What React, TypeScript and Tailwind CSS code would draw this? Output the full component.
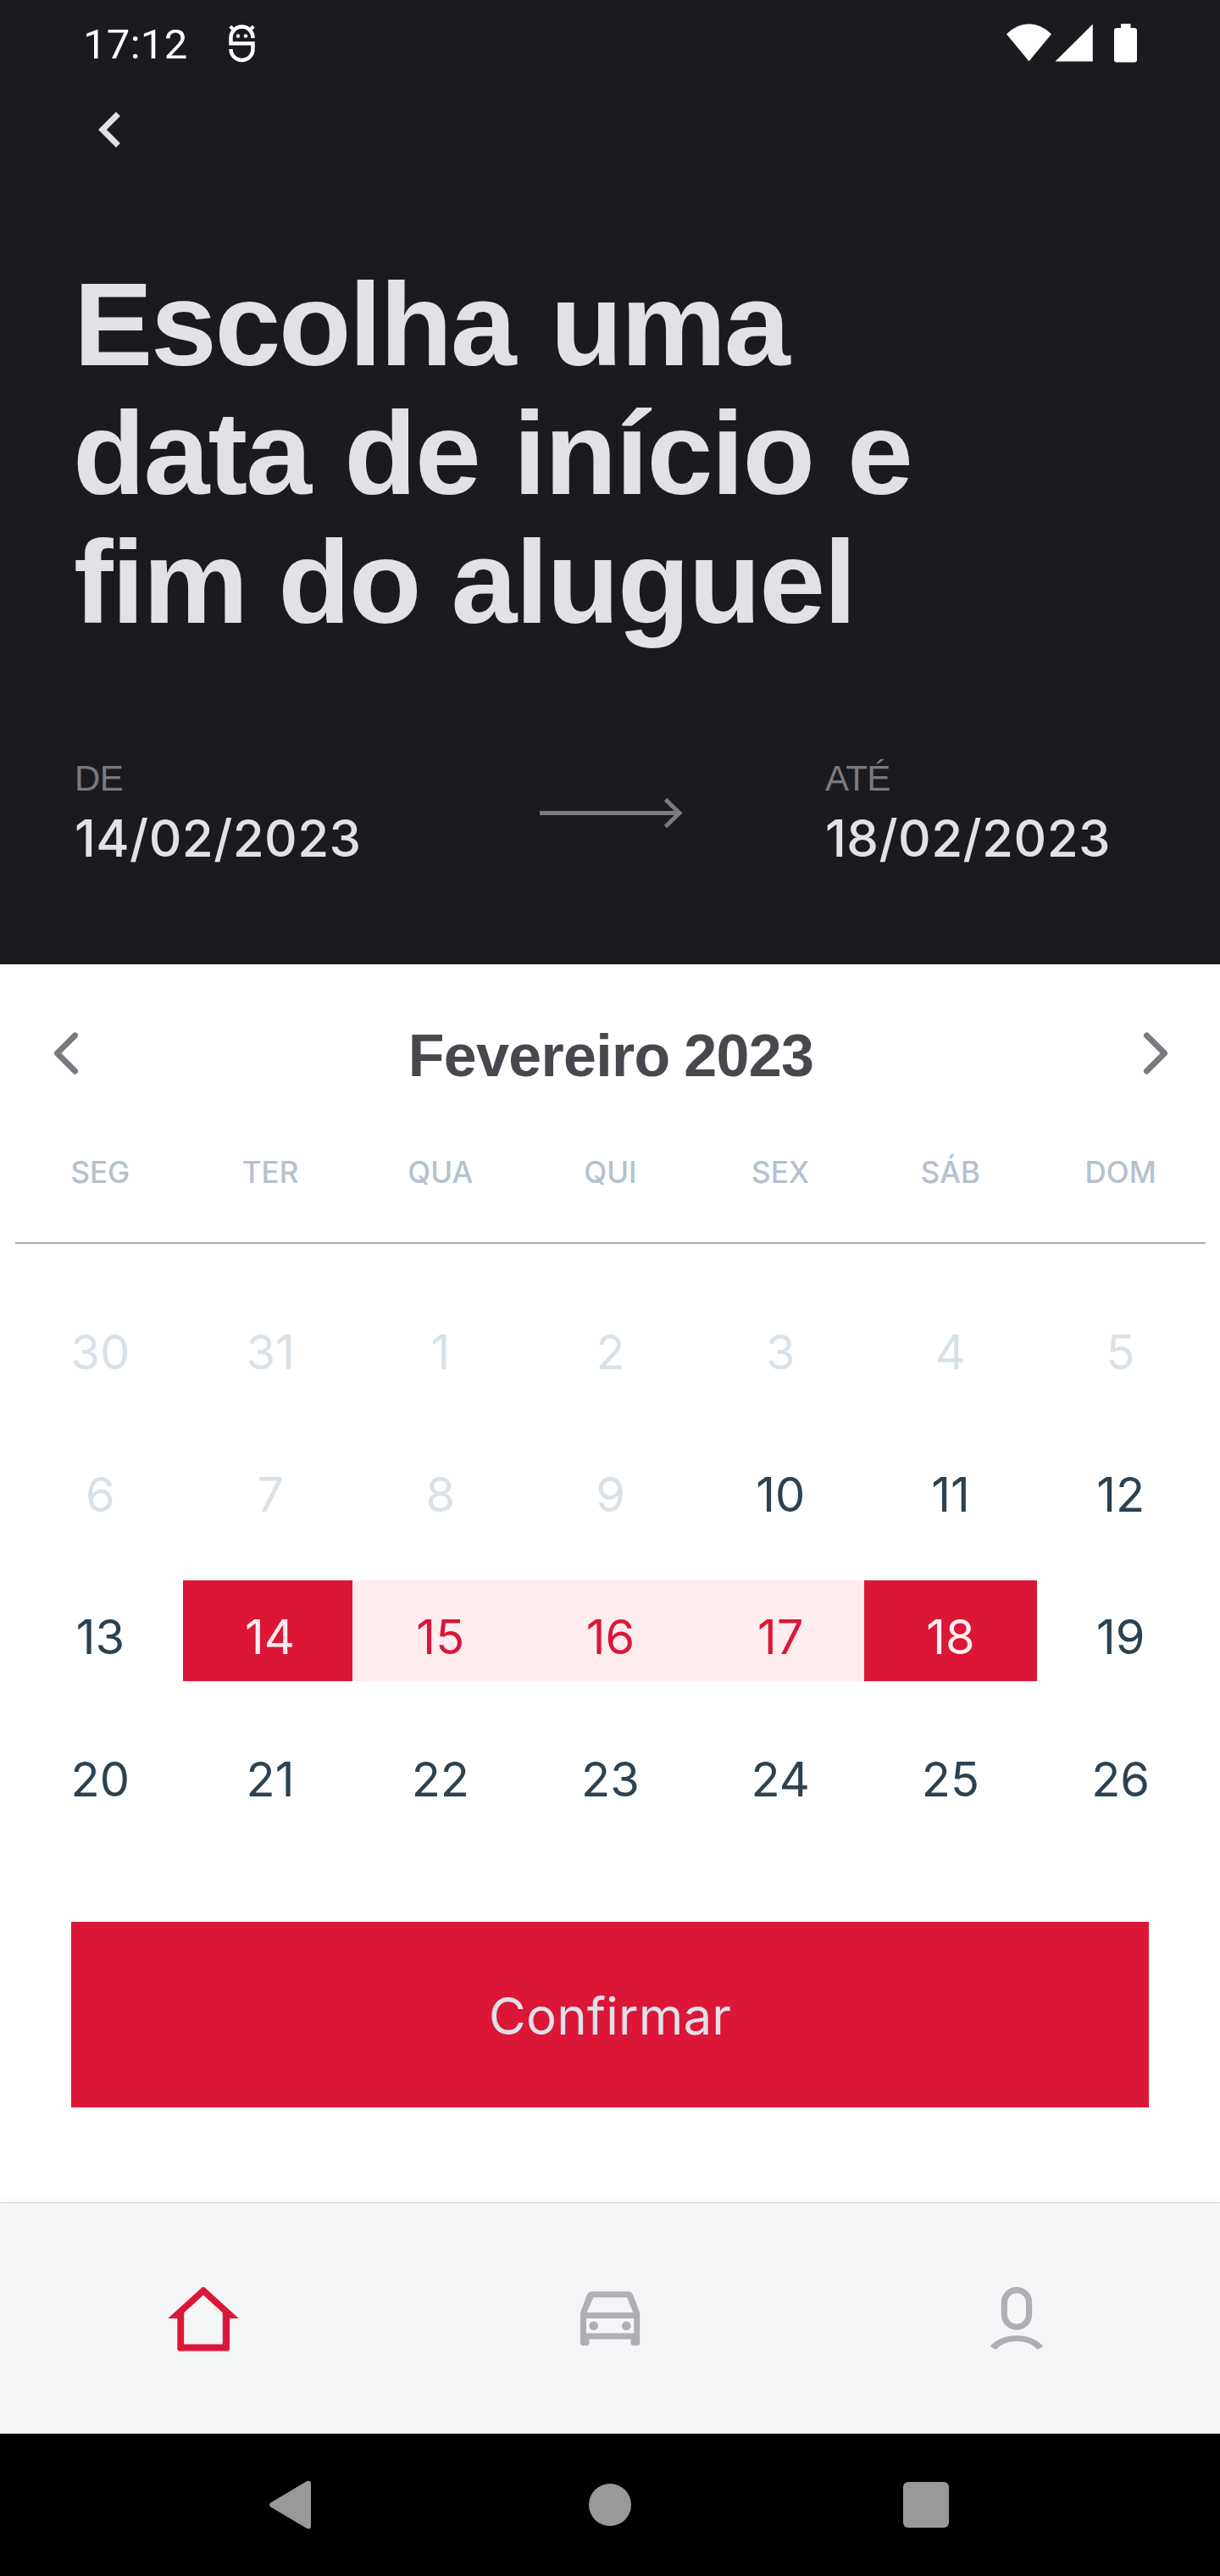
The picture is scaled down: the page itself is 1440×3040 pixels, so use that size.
import React from "react";

const WEEK_DAYS = ["SEG", "TER", "QUA", "QUI", "SEX", "SÁB", "DOM"];

const WEEKS = [
  [30, 31, 1, 2, 3, 4, 5],
  [6, 7, 8, 9, 10, 11, 12],
  [13, 14, 15, 16, 17, 18, 19],
  [20, 21, 22, 23, 24, 25, 26],
];

function dayStyle(week: number, day: number) {
  if (week === 0 || day < 10) return "text-[#d9e1e8]";
  if (day === 14) return "-ml-[3px] mr-[3px] pl-[5px] bg-[#dc1637] text-[#fdedef]";
  if (day === 15) return "-ml-[3px] pl-[3px] bg-[#fdedef] text-[#dc1637]";
  if (day === 18) return "-ml-[2px] -mr-[2px] bg-[#dc1637] text-[#fdedef]";
  if (day > 15 && day < 18) return "bg-[#fdedef] text-[#dc1637]";
  return "text-[#2d4150]";
}

function StatusBar() {
  return (
    <div className="flex h-[111px] items-start justify-between pl-[98px] pr-[98px]">
      <div className="flex items-start">
        <span className="mt-[24px] w-[172px] font-[Roboto,sans-serif] text-[49px] leading-[58px] tracking-[0.3px] text-white">
          17:12
        </span>
        <svg className="mt-[28px]" width="32" height="46" viewBox="270 28 32 46" fill="none" stroke="#fff">
          <path
            strokeWidth="4.5"
            d="M298.5 45v-.5a13 13 0 0 0-26 0v6.8h26V58a13 13 0 0 1-26 0"
          />
          <path strokeWidth="4" d="M271.8 31.2l5 5M299.2 31.2l-5 5" />
          <circle cx="281" cy="42.5" r="2.2" fill="#fff" stroke="none" />
          <circle cx="290" cy="42.5" r="2.2" fill="#fff" stroke="none" />
        </svg>
      </div>
      <svg className="mt-[27px]" width="156" height="48" viewBox="1186 27 156 48" fill="#fff">
        <path d="M1214.5 72.2 1188 40.2Q1200 28.2 1214.5 28.2T1241 40.2Z" />
        <path d="M1245.5 72.6 1289.8 28.6V72.6Z" />
        <path d="M1323 28h11.5v5h4.5a3 3 0 0 1 3 3v34.5a3 3 0 0 1-3 3h-21a3 3 0 0 1-3-3V36a3 3 0 0 1 3-3h5Z" />
      </svg>
    </div>
  );
}

function DateField({ label, value }: { label: string; value: string }) {
  return (
    <div className="flex flex-col">
      <span className="font-['Liberation_Sans',sans-serif] text-[42px] leading-[48px] tracking-[-0.6px] text-[#7a7a80]">
        {label}
      </span>
      <span className="mt-[6px] font-[Inter,sans-serif] text-[60px] font-medium leading-[80px] tracking-[0.4px] text-[#e1e1e6]">
        {value}
      </span>
    </div>
  );
}

function Header() {
  return (
    <header className="flex h-[1138px] flex-col bg-[#1b1b1f]">
      <StatusBar />
      <button className="ml-[88px] size-[84px]" aria-label="Voltar">
        <svg width="84" height="84" viewBox="0 0 24 24" fill="#e1e1e6">
          <path d="M15.41 7.41 14 6l-6 6 6 6 1.41-1.41L10.83 12z" />
        </svg>
      </button>
      <h1 className="ml-[87px] mt-[112px] flex flex-col whitespace-nowrap font-['Liberation_Sans',sans-serif] text-[140px] font-bold leading-[152px] text-[#e1e1e6]">
        <span className="tracking-[-2.4px] [word-spacing:6px]">Escolha uma</span>
        <span className="-ml-px tracking-[-1.9px] [word-spacing:3px]">data de início e</span>
        <span className="tracking-[-1.9px]">fim do aluguel</span>
      </h1>
      <div className="mt-[132px] grid grid-cols-[549px_337px_1fr] pl-[88px]">
        <DateField label="DE" value="14/02/2023" />
        <svg className="mt-[46px]" width="170" height="38" viewBox="0 0 170 38" fill="none" stroke="#7a7a80" strokeWidth="5">
          <path d="M0 18.5H165M148.5 2.5l16.5 16-16.5 16" />
        </svg>
        <DateField label="ATÉ" value="18/02/2023" />
      </div>
    </header>
  );
}

function MonthArrow({ points, label }: { points: string; label: string }) {
  return (
    <button className="size-[84px]" aria-label={label}>
      <svg
        width="84"
        height="84"
        viewBox="0 0 24 24"
        fill="none"
        stroke="#7a7a80"
        strokeWidth="2"
        strokeLinecap="round"
        strokeLinejoin="round"
      >
        <polyline points={points} />
      </svg>
    </button>
  );
}

function Calendar() {
  return (
    <section className="h-[1130px] pl-[18px] pr-[17px] pt-[62px] font-[Inter,sans-serif]">
      <div className="flex h-[85px] items-center justify-between pl-[18px] pr-[17px]">
        <MonthArrow points="15 18 9 12 15 6" label="Mês anterior" />
        <h2 className="mt-[6px] font-['Liberation_Sans',sans-serif] text-[70px] font-bold leading-[80px] tracking-[-0.7px] text-[#47474d] [word-spacing:-2px]">
          Fevereiro 2023
        </h2>
        <MonthArrow points="9 18 15 12 9 6" label="Próximo mês" />
      </div>
      <div className="mt-[75px] grid h-[108px] grid-cols-7 border-b-2 border-[#aeaeb3] text-center text-[35px] font-medium leading-[46px] text-[#b6c1cd]">
        {WEEK_DAYS.map((day) => (
          <span key={day}>{day}</span>
        ))}
      </div>
      <div className="mt-[61px] flex flex-col gap-[49px]">
        {WEEKS.map((week, i) => (
          <div key={i} className="grid grid-cols-7">
            {week.map((day) => (
              <span
                key={day}
                className={`flex h-[119px] items-center justify-center pt-[14px] text-[56px] leading-[60px] ${dayStyle(i, day)}`}
              >
                {day}
              </span>
            ))}
          </div>
        ))}
      </div>
    </section>
  );
}

function TabBar() {
  return (
    <nav className="flex h-[273px] items-start justify-around border-t border-[#d8d8d8] bg-[#f4f5f6] pt-[98px] shadow-[0_-2px_8px_rgba(0,0,0,0.05)]">
      <svg width="84" height="80" viewBox="198 2698 84 80" fill="#dc1637">
        <path
          fillRule="evenodd"
          d="M237.6 2700.2Q240 2697.8 242.4 2700.2L281.8 2736H271V2771.5Q271 2774.6 268 2774.6H212.3Q209.3 2774.6 209.3 2771.5V2736H198.2ZM240 2708.6 217.2 2729.3V2766.5H262.8V2729.3Z"
        />
      </svg>
      <svg width="84" height="80" viewBox="678 2698 84 80" fill="#aeaeb3">
        <path
          fillRule="evenodd"
          d="M699 2704.2H741Q745.8 2704.2 747.3 2708.5L755.2 2729.5V2765Q755.2 2768 752.2 2768H747.6Q744.6 2768 744.6 2765V2760.5H695.5V2765Q695.5 2768 692.5 2768H688Q685 2768 685 2765V2729.5L692.7 2708.5Q694.3 2704.2 699 2704.2ZM700.3 2711.3 692.7 2729H747.4L740 2711.3ZM692 2736V2753.5H748.2V2736Z"
        />
        <circle cx="700.8" cy="2744.7" r="5.3" />
        <circle cx="739.3" cy="2744.7" r="5.3" />
      </svg>
      <svg width="84" height="80" viewBox="1158 2698 84 80" fill="none" stroke="#aeaeb3" strokeWidth="7.2">
        <rect x="1185.4" y="2702.6" width="29.2" height="43.5" rx="14.6" />
        <path fill="#aeaeb3" stroke="none" d="M1168.7 2769Q1180 2756.3 1200 2756.3T1231.3 2769L1225 2772.7Q1216 2763 1200 2763T1175.3 2772.7Z" />
      </svg>
    </nav>
  );
}

function SystemBar() {
  return (
    <div className="flex h-[168px] items-center bg-black pl-[317px]">
      <svg width="52" height="60" viewBox="0 0 52 60" fill="#999">
        <path d="M2.5 27.5 44 2.7Q50 0 50 5V55Q50 60 44 57.3L2.5 32.5Q-.5 30 2.5 27.5Z" />
      </svg>
      <div className="ml-[326px] size-[50px] rounded-full bg-[#999]" />
      <div className="ml-[321px] size-[54px] rounded-[6px] bg-[#999]" />
    </div>
  );
}

export default function App() {
  return (
    <main className="flex h-[3040px] w-[1440px] flex-col overflow-hidden bg-white">
      <Header />
      <Calendar />
      <button className="mx-[84px] h-[219px] shrink-0 bg-[#dc1637] pt-[2px] font-[Inter,sans-serif] text-[60px] tracking-[0.2px] text-[#e1e1e6]">
        Confirmar
      </button>
      <div className="h-[112px] shrink-0" />
      <TabBar />
      <SystemBar />
    </main>
  );
}
